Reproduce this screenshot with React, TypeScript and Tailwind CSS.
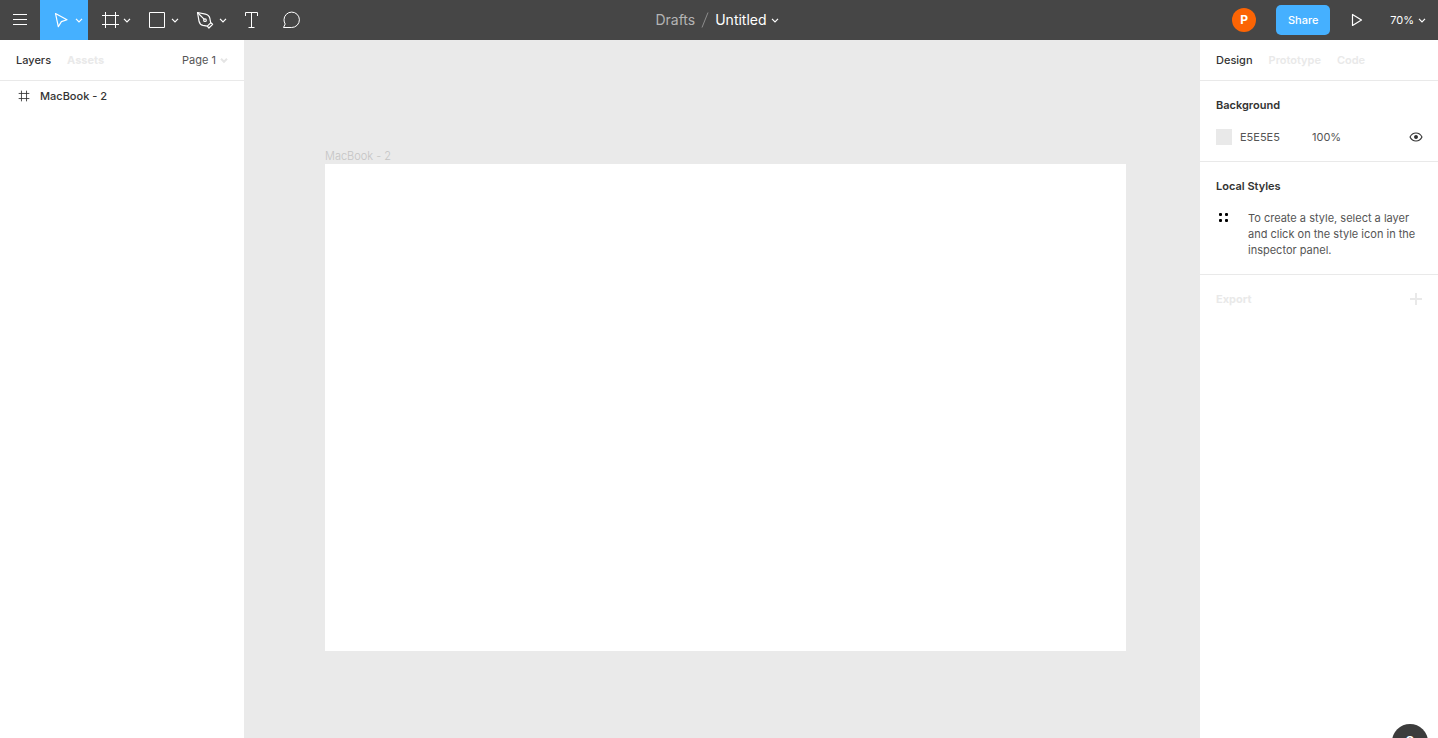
import { ReactNode } from "react";

const inspectorTabs = ["Design", "Prototype", "Code"];

function Icon({
  children,
  className = "size-6",
}: {
  children: ReactNode;
  className?: string;
}) {
  return (
    <svg
      viewBox="0 0 24 24"
      className={`${className} shrink-0`}
      fill="none"
      stroke="currentColor"
      aria-hidden="true"
    >
      {children}
    </svg>
  );
}

function Chevron({ thick = false }: { thick?: boolean }) {
  return (
    <svg
      viewBox="0 0 8 8"
      className="size-2 shrink-0"
      fill="none"
      stroke="currentColor"
      strokeWidth={thick ? 2 : 1.2}
      aria-hidden="true"
    >
      <path d="M1 2.8l3 3 3-3" />
    </svg>
  );
}

function Tool({
  label,
  active = false,
  children,
}: {
  label: string;
  active?: boolean;
  children: ReactNode;
}) {
  return (
    <button
      aria-label={label}
      aria-pressed={active}
      className={`flex h-10 w-12 items-center gap-0.5 pl-[9px] ${
        active ? "bg-[#45b0ff]" : ""
      }`}
    >
      <Icon>{children}</Icon>
      <Chevron />
    </button>
  );
}

function Toolbar() {
  return (
    <header className="grid h-10 shrink-0 grid-cols-[1fr_auto_1fr] items-center bg-[#464646] text-white">
      <div className="flex">
        <button
          aria-label="Menu"
          className="flex size-10 items-center justify-center"
        >
          <Icon>
            <path d="M5 6.5h14M5 11.5h14M5 16.5h14" />
          </Icon>
        </button>
        <Tool label="Move" active>
          <path
            d="M6.5 5.5l11.500 6.200-5.600 1.900-3.100 5.100z"
            strokeWidth="1.200"
            strokeLinejoin="round"
          />
        </Tool>
        <Tool label="Frame">
          <path d="M8.5 4v16M18.5 4v16M5 7.5h17M5 16.5h17" />
        </Tool>
        <Tool label="Rectangle">
          <path d="M4.5 4.5h15v15h-15z" />
        </Tool>
        <Tool label="Pen">
          <g strokeWidth="1.200" strokeLinejoin="round">
            <path d="M4.500 4.500l8 1.700c2.600.6 3.900 2 4.400 4.300l.8 4.300-3.400 3.400-4.300-.8c-2.200-.5-3.500-1.900-4-4.300z" />
            <path d="M4.500 4.500l6.800 6.900" />
            <path d="M17.700 14.800l1.900 1.500-3.700 3.700-1.600-1.800" />
            <circle cx="12" cy="12.200" r="1.300" />
          </g>
        </Tool>
        <button
          aria-label="Text"
          className="flex size-10 items-center justify-center"
        >
          <Icon>
            <path d="M5.500 8V4.500h12V8M11.500 4.500v15M8.500 19.500h6" />
          </Icon>
        </button>
        <button
          aria-label="Comment"
          className="flex size-10 items-center justify-center"
        >
          <Icon>
            <path
              d="M3.500 19.500h8.200a7.700 7.700 0 1 0-7.700-7.700c0 1.600.4 2.900 1.200 4.200z"
              strokeLinejoin="round"
            />
          </Icon>
        </button>
      </div>

      <div className="flex items-center pr-1 text-sm">
        <a href="#drafts" className="text-[#b4b4b4]">
          Drafts
        </a>
        <svg
          viewBox="0 0 8 16"
          className="mx-1.5 h-4 w-2"
          stroke="#8c8c8c"
          aria-hidden="true"
        >
          <path d="M1 15.500L7 .5" />
        </svg>
        <button className="flex items-center gap-1">
          Untitled
          <Chevron />
        </button>
      </div>

      <div className="flex items-center justify-end pr-3 text-[11px]">
        <div className="flex size-6 items-center justify-center rounded-full bg-[#fb6404] text-xs font-bold">
          P
        </div>
        <button className="ml-5 flex h-[30px] w-[54px] items-center justify-center rounded-[5px] bg-[#45b0ff] font-medium">
          Share
        </button>
        <button
          aria-label="Present"
          className="ml-4 flex h-10 w-6 items-center justify-center"
        >
          <Icon>
            <path
              d="M6.500 6.500v11l9-5.500z"
              strokeWidth="1.200"
              strokeLinejoin="round"
            />
          </Icon>
        </button>
        <button className="ml-5 flex items-center gap-1">
          70%
          <Chevron />
        </button>
      </div>
    </header>
  );
}

function LayersPanel() {
  return (
    <aside className="w-[244px] shrink-0 bg-white">
      <div className="flex h-[41px] items-center gap-4 border-b border-[#e9e9e9] px-4">
        <button className="font-medium">Layers</button>
        <button className="font-bold text-[#e9e9e9]">Assets</button>
        <button className="ml-auto flex items-center gap-1 text-[#555]">
          Page 1
          <span className="text-[#e5e5e5]">
            <Chevron thick />
          </span>
        </button>
      </div>
      <ul>
        <li>
          <button className="flex h-[30px] w-full items-center gap-2 px-4 font-medium">
            <Icon className="size-4">
              <path
                d="M8.200 4v16M15.800 4v16M4 8.200h16M4 15.800h16"
                strokeWidth="1.300"
              />
            </Icon>
            MacBook - 2
          </button>
        </li>
      </ul>
    </aside>
  );
}

function Canvas() {
  return (
    <main className="min-w-0 flex-1 bg-[#eaeaea] pt-[108px] pr-[74px] pl-[81px]">
      <p className="h-4 text-[11px] leading-4 font-light text-[#c4c4c4]">
        MacBook - 2
      </p>
      <div className="aspect-[801/487] w-full bg-white" />
    </main>
  );
}

function Inspector() {
  return (
    <aside className="w-[238px] shrink-0 bg-white">
      <div className="flex h-[41px] items-center gap-4 border-b border-[#e9e9e9] px-4">
        {inspectorTabs.map((tab, index) => (
          <button
            key={tab}
            className={
              index === 0 ? "font-medium" : "font-semibold text-[#e9e9e9]"
            }
          >
            {tab}
          </button>
        ))}
      </div>

      <section className="border-b border-[#e9e9e9] px-4 py-2">
        <h2 className="flex h-8 items-center font-semibold">Background</h2>
        <div className="flex h-8 items-center text-[#555]">
          <span className="size-4 bg-[#e9e9e9]" />
          <input
            aria-label="Background colour"
            defaultValue="E5E5E5"
            className="ml-2 w-[72px] outline-none"
          />
          <input
            aria-label="Background opacity"
            defaultValue="100%"
            className="w-12 outline-none"
          />
          <button aria-label="Toggle background" className="ml-auto -mr-0.5">
            <Icon className="size-4 text-[#333]">
              <path
                d="M3 12c2-4 5.300-6 9-6s7 2 9 6c-2 4-5.300 6-9 6s-7-2-9-6z"
                strokeWidth="1.600"
              />
              <circle cx="12" cy="12" r="2.500" fill="currentColor" />
            </Icon>
          </button>
        </div>
      </section>

      <section className="border-b border-[#e9e9e9] px-4 pt-2 pb-4">
        <h2 className="flex h-8 items-center font-semibold">Local Styles</h2>
        <div className="mt-2 flex gap-4 text-[#555]">
          <svg
            viewBox="0 0 16 16"
            className="size-4 shrink-0"
            fill="#000"
            aria-hidden="true"
          >
            <rect x="3" y="3" width="3" height="3" rx="1" />
            <rect x="9" y="3" width="3" height="3" rx="1" />
            <rect x="3" y="9" width="3" height="3" rx="1" />
            <rect x="9" y="9" width="3" height="3" rx="1" />
          </svg>
          <p className="leading-4">
            To create a style, select a layer and click on the style icon in the
            inspector panel.
          </p>
        </div>
      </section>

      <section className="flex h-12 items-center justify-between px-4 text-[#e9e9e9]">
        <h2 className="font-bold">Export</h2>
        <button aria-label="Add export">
          <svg
            viewBox="0 0 12 12"
            className="size-3"
            stroke="currentColor"
            strokeWidth="2"
            aria-hidden="true"
          >
            <path d="M6 0v12M0 6h12" />
          </svg>
        </button>
      </section>
    </aside>
  );
}

export default function App() {
  return (
    <div className="relative flex h-screen flex-col overflow-hidden font-['Inter',sans-serif] text-[11px] text-[#333]">
      <Toolbar />
      <div className="flex min-h-0 flex-1">
        <LayersPanel />
        <Canvas />
        <Inspector />
      </div>
      <button
        aria-label="Help"
        className="absolute right-2.5 -bottom-[22px] flex size-9 items-center justify-center rounded-full bg-[#3c3c3c] text-base font-medium text-white"
      >
        ?
      </button>
    </div>
  );
}
